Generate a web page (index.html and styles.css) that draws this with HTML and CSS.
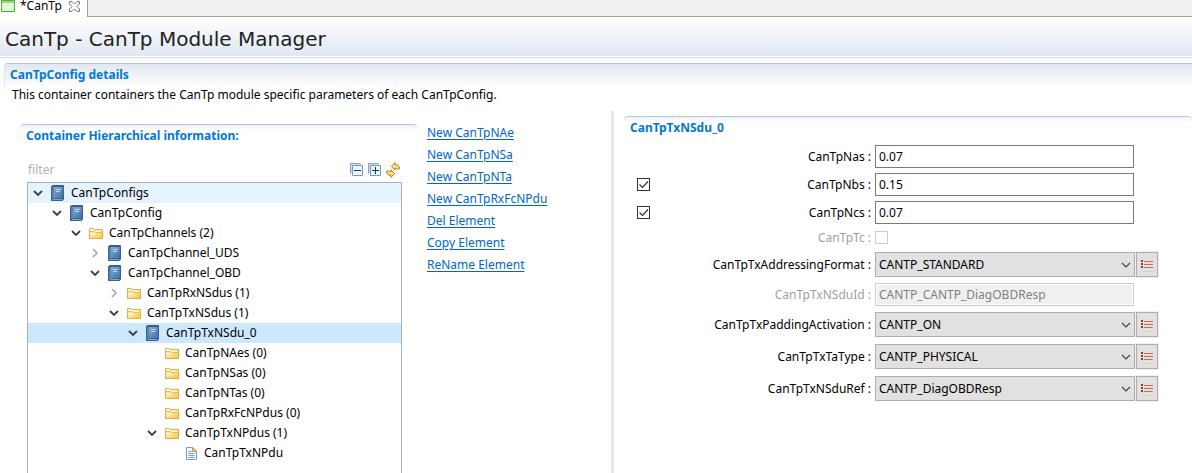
FILE: index.html
```html
<!DOCTYPE html>
<html lang="en">
<head>
<meta charset="utf-8">
<title>CanTp Module Manager</title>
<link rel="stylesheet" href="styles.css">
</head>
<body>
<svg class="sprite" aria-hidden="true">
  <defs>
    <linearGradient id="blue" x1="0" y1="0" x2="1" y2="1"><stop offset="0" stop-color="#86abd3"/><stop offset="1" stop-color="#3f70aa"/></linearGradient>
    <linearGradient id="gold" x1="0" y1="0" x2="1" y2="1"><stop offset="0" stop-color="#fffbe6"/><stop offset="1" stop-color="#f7c63c"/></linearGradient>
    <symbol id="open" viewBox="0 0 10 16"><path d="M1 6l4 4 4-4" fill="none" stroke="#404040" stroke-width="1.8"/></symbol>
    <symbol id="closed" viewBox="0 0 10 16"><path d="M3 4l4 4-4 4" fill="none" stroke="#a6a6a6" stroke-width="1.6"/></symbol>
    <symbol id="book" viewBox="0 0 14 16"><path d="M1.500.5h11v13.500l-1 1.500H.5V1.500z" fill="#35608f" stroke="#35608f"/><path d="M3 2h9v11H3z" fill="url(#blue)"/><path d="M2 2v12" stroke="#7ea3cc"/><path d="M2 14.500h9" stroke="#87a9cd"/><path d="M5 4.500h5M5 6.500h4" stroke="#c5d9ee"/></symbol>
    <symbol id="folder" viewBox="0 0 14 16"><path d="M.5 13.500v-10h4l1 1h8v9z" fill="url(#gold)" stroke="#e2ad48"/><path d="M.5 6.500h5l1 1h7" fill="none" stroke="#e9bd62"/><path d="M2 5.500h3M7 6h5" stroke="#fffdf2"/><path d="M2.500 9.500h4" stroke="#fffbe2"/></symbol>
    <symbol id="page" viewBox="0 0 14 16"><path d="M2.500 2.500h6l4 3.500v8.500h-10z" fill="#f3f8ff" stroke="#8b95aa"/><path d="M8.500 2.500v4h4z" fill="#f2dda0" stroke="#b49a61"/><path d="M4.500 6.500h3M4.500 8.500h6M4.500 10.500h6M4.500 12.500h6" stroke="#7f9cc9"/></symbol>
    <symbol id="list" viewBox="0 0 14 14"><path d="M1 3h2M1 6h2M1 9h2" stroke="#8a3d2c" stroke-width="2"/><path d="M4 3.500h9M4 6.500h9M4 9.500h9" stroke="#d46a4e"/><path d="M2 13.500h12" stroke="#d0d0d0"/></symbol>
  </defs>
</svg>

<nav class="tabs">
  <div class="tab">
    <svg class="tab-icon" width="14" height="12" viewBox="0 0 14 12"><path d="M.5.500h13v11H.5z" fill="#e3f7d9" stroke="#58a63f"/><path d="M1 2h12" stroke="#9adb7c" stroke-width="2"/></svg>
    <span>*CanTp</span>
    <button class="close" aria-label="Close"><svg width="11" height="11" viewBox="0 0 11 11"><path d="M.5.500h2.500l2.500 2.500L8 .5h2.500V3L8 5.500 10.500 8v2.500H8L5.500 8 3 10.500H.5V8L3 5.500.5 3z" fill="#fff" stroke="#777"/></svg></button>
  </div>
  <div class="tab-rest"></div>
</nav>

<header class="title"><h1>CanTp - CanTp Module Manager</h1></header>

<main class="details">
  <h2 class="heading heading-main">CanTpConfig details</h2>
  <p class="description">This container containers the CanTp module specific parameters of each CanTpConfig.</p>

  <div class="panes">
    <section class="left">
      <div class="hierarchy">
        <h3 class="heading heading-sub">Container Hierarchical information:</h3>
        <div class="toolbar">
          <input class="filter" type="text" placeholder="filter" aria-label="filter">
          <button class="tool" aria-label="Collapse all"><svg width="14" height="14" viewBox="0 0 14 14"><path d="M.5 10.500v-10h10" fill="#dce8f5" stroke="#8d9fbd"/><path d="M1 1.500h10M1.500 1v10" stroke="#cfdcee"/><path d="M2.500 2.500h10v10h-10z" fill="#e9f8ff" stroke="#8296b7"/><path d="M4 7.500h7" stroke="#083b70"/></svg></button>
          <button class="tool" aria-label="Expand all"><svg width="14" height="14" viewBox="0 0 14 14"><path d="M.5 10.500v-10h10" fill="#dce8f5" stroke="#8d9fbd"/><path d="M1 1.500h10M1.500 1v10" stroke="#cfdcee"/><path d="M2.500 2.500h10v10h-10z" fill="#e9f8ff" stroke="#8296b7"/><path d="M4 7.500h7M7.500 4v7" stroke="#083b70"/></svg></button>
          <button class="tool" aria-label="Refresh"><svg width="14" height="16" viewBox="0 0 14 16"><path d="M5.500 4.500l3.500-4v2c2.500 0 4.500 1.500 4.500 4l-1.500 1c-.5-1-1.500-1.500-3-1v1.500z" fill="#ffe082" stroke="#b57b12"/><path d="M8.500 11.500l-3.500 4v-2c-2.500 0-4.500-1.500-4.500-4l1.500-1c.5 1 1.500 1.500 3 1V8z" fill="#ffe082" stroke="#b57b12"/></svg></button>
        </div>
        <ul class="tree">
          <li><div class="node hover"><svg class="arrow"><use href="#open"/></svg><svg class="icon"><use href="#book"/></svg>CanTpConfigs</div>
            <ul><li><div class="node"><svg class="arrow"><use href="#open"/></svg><svg class="icon"><use href="#book"/></svg>CanTpConfig</div>
              <ul><li><div class="node"><svg class="arrow"><use href="#open"/></svg><svg class="icon"><use href="#folder"/></svg>CanTpChannels (2)</div>
                <ul>
                  <li><div class="node"><svg class="arrow"><use href="#closed"/></svg><svg class="icon"><use href="#book"/></svg>CanTpChannel_UDS</div></li>
                  <li><div class="node"><svg class="arrow"><use href="#open"/></svg><svg class="icon"><use href="#book"/></svg>CanTpChannel_OBD</div>
                    <ul>
                      <li><div class="node"><svg class="arrow"><use href="#closed"/></svg><svg class="icon"><use href="#folder"/></svg>CanTpRxNSdus (1)</div></li>
                      <li><div class="node"><svg class="arrow"><use href="#open"/></svg><svg class="icon"><use href="#folder"/></svg>CanTpTxNSdus (1)</div>
                        <ul><li><div class="node selected"><svg class="arrow"><use href="#open"/></svg><svg class="icon"><use href="#book"/></svg>CanTpTxNSdu_0</div>
                          <ul>
                            <li><div class="node"><span class="arrow"></span><svg class="icon"><use href="#folder"/></svg>CanTpNAes (0)</div></li>
                            <li><div class="node"><span class="arrow"></span><svg class="icon"><use href="#folder"/></svg>CanTpNSas (0)</div></li>
                            <li><div class="node"><span class="arrow"></span><svg class="icon"><use href="#folder"/></svg>CanTpNTas (0)</div></li>
                            <li><div class="node"><span class="arrow"></span><svg class="icon"><use href="#folder"/></svg>CanTpRxFcNPdus (0)</div></li>
                            <li><div class="node"><svg class="arrow"><use href="#open"/></svg><svg class="icon"><use href="#folder"/></svg>CanTpTxNPdus (1)</div>
                              <ul><li><div class="node"><span class="arrow"></span><svg class="icon"><use href="#page"/></svg>CanTpTxNPdu</div></li></ul>
                            </li>
                          </ul>
                        </li></ul>
                      </li>
                    </ul>
                  </li>
                </ul>
              </li></ul>
            </li></ul>
          </li>
        </ul>
      </div>
      <nav class="actions">
        <a href="#">New CanTpNAe</a>
        <a href="#">New CanTpNSa</a>
        <a href="#">New CanTpNTa</a>
        <a href="#">New CanTpRxFcNPdu</a>
        <a href="#">Del Element</a>
        <a href="#">Copy Element</a>
        <a href="#">ReName Element</a>
      </nav>
    </section>

    <div class="sash"></div>

    <section class="right">
      <h3 class="heading heading-sub">CanTpTxNSdu_0</h3>
      <form class="form">
        <div class="row"><label for="nas">CanTpNas :</label><input class="text" id="nas" type="text" value="0.07"></div>
        <div class="row"><input class="check" type="checkbox" checked aria-label="Enable CanTpNbs"><label for="nbs">CanTpNbs :</label><input class="text" id="nbs" type="text" value="0.15"></div>
        <div class="row"><input class="check" type="checkbox" checked aria-label="Enable CanTpNcs"><label for="ncs">CanTpNcs :</label><input class="text" id="ncs" type="text" value="0.07"></div>
        <div class="row row-check"><label class="off" for="tc">CanTpTc :</label><input class="check" id="tc" type="checkbox" disabled></div>
        <div class="row row-combo"><label for="fmt">CanTpTxAddressingFormat :</label><select class="combo" id="fmt"><option>CANTP_STANDARD</option></select><button class="pick" type="button" aria-label="Choose"><svg width="14" height="14"><use href="#list"/></svg></button></div>
        <div class="row"><label class="off" for="sid">CanTpTxNSduId :</label><input class="text" id="sid" type="text" value="CANTP_CANTP_DiagOBDResp" disabled></div>
        <div class="row row-combo"><label for="pad">CanTpTxPaddingActivation :</label><select class="combo" id="pad"><option>CANTP_ON</option></select><button class="pick" type="button" aria-label="Choose"><svg width="14" height="14"><use href="#list"/></svg></button></div>
        <div class="row row-combo"><label for="ta">CanTpTxTaType :</label><select class="combo" id="ta"><option>CANTP_PHYSICAL</option></select><button class="pick" type="button" aria-label="Choose"><svg width="14" height="14"><use href="#list"/></svg></button></div>
        <div class="row row-combo"><label for="ref">CanTpTxNSduRef :</label><select class="combo" id="ref"><option>CANTP_DiagOBDResp</option></select><button class="pick" type="button" aria-label="Choose"><svg width="14" height="14"><use href="#list"/></svg></button></div>
      </form>
    </section>
  </div>
</main>
</body>
</html>
```
FILE: styles.css
```css
* { box-sizing: border-box; }

body {
  margin: 0;
  height: 100vh;
  overflow: hidden;
  display: flex;
  flex-direction: column;
  background: #fff;
  color: #000;
  font: 12px/16px "Noto Sans", "Open Sans", sans-serif;
}

h1, h2, h3, p, ul { margin: 0; padding: 0; }
ul { list-style: none; }
button { padding: 0; border: 0; background: none; font: inherit; }
input, select { font: inherit; color: inherit; margin: 0; }
svg { display: block; flex: none; }
.sprite { position: absolute; width: 0; height: 0; }

.tabs { display: flex; height: 17px; flex: none; }
.tab {
  display: flex;
  align-items: flex-end;
  gap: 5px;
  padding: 0 7px 5px 1px;
  border-right: 1px solid #a0a0a0;
}
.tab span { line-height: 12px; }
.tab-rest { flex: 1; background: #f0f0f0; border-bottom: 1px solid #a0a0a0; }
.close { margin-left: 2px; }

.title {
  flex: none;
  height: 41px;
  padding: 8px 5px;
  background: linear-gradient(#fff, #e1e8f1 95%);
  border-bottom: 1px solid #d5dfeb;
  box-shadow: inset 0 -1px #fff;
}
h1 { font: 20px/28px "DejaVu Sans", sans-serif; color: #222; }

.details {
  flex: 1;
  min-height: 0;
  display: flex;
  flex-direction: column;
  padding: 5px 0 0 4px;
}
.heading { font-size: 12px; font-weight: 700; color: #0078d7; border-top: 1px solid #b4c8dd; }
.heading-main {
  padding: 3px 5px 4px;
  border-left: 1px solid #dde5ef;
  border-radius: 4px 0 0 0;
  background: linear-gradient(#e0e8f1, #fff);
}
.description { padding: 0 8px; }

.panes {
  flex: 1;
  min-height: 0;
  display: grid;
  grid-template-columns: 607fr 3px 578fr;
  margin-top: 8px;
}
.sash { background: #e1e8f1; }

.left { display: flex; gap: 10px; padding: 13px 0 0 16px; min-height: 0; }
.hierarchy { flex: 1; min-width: 0; display: flex; flex-direction: column; }
.heading-sub {
  padding: 3px 6px 4px;
  border-radius: 4px 4px 0 0;
  background: linear-gradient(#edf2f8, #fff 5px);
}
.toolbar { display: flex; align-items: center; gap: 4px; height: 20px; margin: 12px 17px 2px 8px; }
.filter { flex: 1; min-width: 0; border: 0; padding: 0; outline: 0; }
.filter::placeholder { color: #b0b0b0; }

.tree { flex: 1; margin: 0 15px 0 7px; border: 1px solid #a3b1c0; border-bottom: 0; }
.node { display: flex; align-items: center; height: 20px; white-space: nowrap; padding-left: var(--indent, 5px); }
.arrow { width: 10px; height: 16px; margin-right: 8px; flex: none; }
.icon { width: 14px; height: 16px; margin-right: 6px; }
.hover { background: #e5f3ff; }
.selected { background: #cce8ff; }
.tree ul { --indent: 24px; }
.tree ul ul { --indent: 43px; }
.tree ul ul ul { --indent: 62px; }
.tree ul ul ul ul { --indent: 81px; }
.tree ul ul ul ul ul { --indent: 100px; }
.tree ul ul ul ul ul ul { --indent: 119px; }
.tree ul ul ul ul ul ul ul { --indent: 138px; }

.actions { width: 184px; flex: none; display: flex; flex-direction: column; align-items: flex-start; gap: 6px; padding-top: 1px; }
.actions a { color: #0066cc; text-underline-offset: 2px; }

.right { padding: 5px 0 0 10px; }
.form { display: flex; flex-direction: column; gap: 5px; margin: 5px 34px 0 13px; }
.row { display: flex; align-items: center; justify-content: flex-end; height: 23px; padding-right: 24px; }
.row-combo { height: 27px; padding-right: 0; }
.row-check { height: 17px; }
.row label { flex: 1; text-align: right; margin-right: 4px; }
.row .off { color: #a0a0a0; }
.text { width: 259px; height: 23px; padding: 0 3px; border: 1px solid #7a7a7a; background: #fff; }
.text:disabled { border-color: #ccc; background: #f0f0f0; color: #808080; box-shadow: inset 0 0 0 1px #fff; }

.check {
  appearance: none;
  width: 13px;
  height: 13px;
  border: 1px solid #333;
  background: #fff;
}
.check:checked {
  background: #fff url("data:image/svg+xml,%3Csvg xmlns='http://www.w3.org/2000/svg' width='11' height='11'%3E%3Cpath d='M1.5 5.500l3 3 5.500-6' fill='none' stroke='%23333' stroke-width='1.2'/%3E%3C/svg%3E") center no-repeat;
}
.check:disabled { border-color: #ccc; }
.row-check .check { margin-right: 246px; }

.combo {
  width: 260px;
  height: 25px;
  padding: 0 20px 0 3px;
  border: 1px solid #adadad;
  border-radius: 0;
  appearance: none;
  background: #e1e1e1 url("data:image/svg+xml,%3Csvg xmlns='http://www.w3.org/2000/svg' width='10' height='6'%3E%3Cpath d='M1 1l4 4 4-4' fill='none' stroke='%23444' stroke-width='1.2'/%3E%3C/svg%3E") right 3px center no-repeat;
}
.pick {
  display: grid;
  place-items: center;
  width: 22px;
  height: 25px;
  margin-left: 1px;
  border: 1px solid #adadad;
  background: #e1e1e1;
  box-shadow: 0 0 0 1px #f0f0f0;
}
```
